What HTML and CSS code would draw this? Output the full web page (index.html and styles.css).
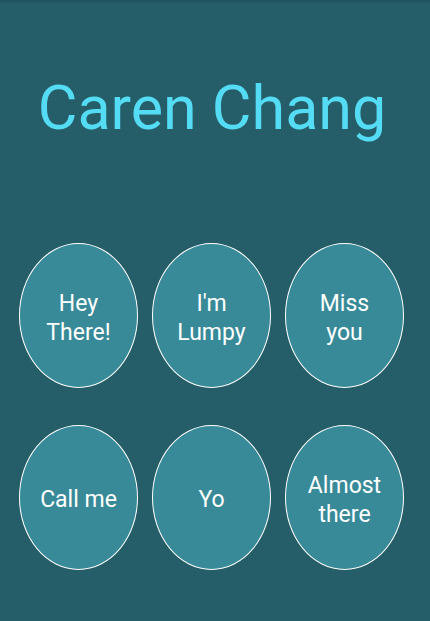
FILE: index.html
```html
<!DOCTYPE html>
<html>
<head>
<meta charset="utf-8">
<link rel="stylesheet" href="styles.css">
</head>
<body>
<div class="screen">
  <h1 class="title">Caren Chang</h1>
  <div class="grid">
    <div class="bubble"><span>Hey<br>There!</span></div>
    <div class="bubble"><span>I'm<br>Lumpy</span></div>
    <div class="bubble"><span>Miss<br>you</span></div>
    <div class="bubble"><span>Call me</span></div>
    <div class="bubble"><span>Yo</span></div>
    <div class="bubble"><span>Almost<br>there</span></div>
  </div>
</div>
</body>
</html>
```
FILE: styles.css
```css
html, body {
  margin: 0;
  padding: 0;
}
body {
  background: #255d68;
  width: 430px;
  height: 621px;
  overflow: hidden;
}
.screen {
  height: 621px;
  background: linear-gradient(to bottom, #1f525c 0px, #255d68 4px);
  display: flex;
  flex-direction: column;
}
.title {
  margin: 0;
  padding-top: 72px;
  font-family: Roboto, sans-serif;
  font-weight: 400;
  font-size: 61px;
  line-height: 72px;
  color: #55dcf5;
  text-align: center;
  padding-right: 6px;
}
.grid {
  margin-top: 99px;
  padding-left: 19px;
  display: grid;
  grid-template-columns: repeat(3, 119px);
  column-gap: 14px;
  row-gap: 37px;
}
.bubble {
  box-sizing: border-box;
  width: 119px;
  height: 145px;
  padding-top: 4px;
  border: 1px solid #ffffff;
  border-radius: 50%;
  background: #388a98;
  display: flex;
  align-items: center;
  justify-content: center;
  text-align: center;
  color: #ffffff;
  font-family: Roboto, sans-serif;
  font-size: 23px;
  line-height: 29px;
}
```
